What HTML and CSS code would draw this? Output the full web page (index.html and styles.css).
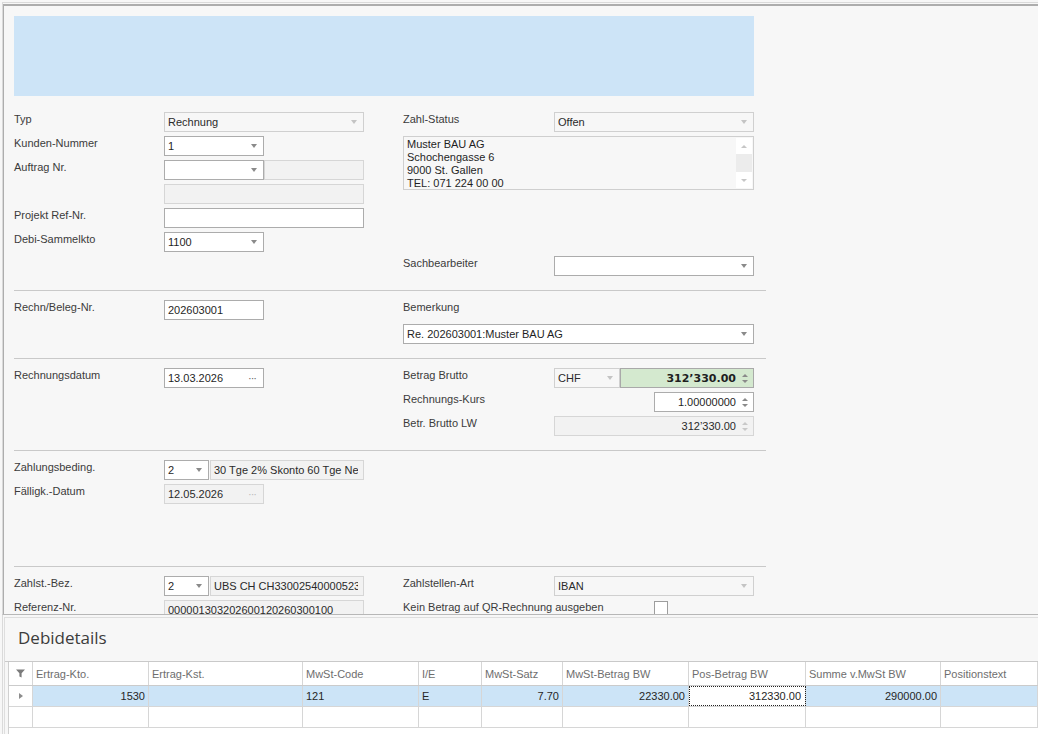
FILE: index.html
```html
<!DOCTYPE html>
<html lang="de">
<head>
  <meta charset="UTF-8" />
  <title>Debitor Rechnung</title>
  <link rel="stylesheet" href="styles.css">
</head>
<body>

  <div class="app">
    <div class="scroller">
      <div class="scroll-inner">
        <div class="banner"></div>

        <div class="form">
          <!-- Kopf -->
          <section class="sec sec-top">
            <div class="col">
              <div class="row"><span class="lbl">Typ</span><div class="fld dis w200"><span class="val">Rechnung</span><i class="arrow light"></i></div></div>
              <div class="row"><span class="lbl">Kunden-Nummer</span><div class="fld w100"><span class="val">1</span><i class="arrow"></i></div></div>
              <div class="row"><span class="lbl">Auftrag Nr.</span><div class="fld w100"><span class="val"></span><i class="arrow"></i></div><div class="fld ro w100"></div></div>
              <div class="row"><span class="lbl"></span><div class="fld ro w200"></div></div>
              <div class="row"><span class="lbl">Projekt Ref-Nr.</span><div class="fld w200"></div></div>
              <div class="row"><span class="lbl">Debi-Sammelkto</span><div class="fld w100"><span class="val">1100</span><i class="arrow"></i></div></div>
            </div>
            <div class="col">
              <div class="row"><span class="lbl">Zahl-Status</span><div class="fld dis w200"><span class="val">Offen</span><i class="arrow light"></i></div></div>
              <div class="memo">
                <div class="memo-text">
                  Muster BAU AG<br>
                  Schochengasse 6<br>
                  9000 St. Gallen<br>
                  TEL: 071 224 00 00
                </div>
                <div class="vscroll">
                  <span class="sb-btn"><i class="tri-up"></i></span>
                  <span class="sb-track"></span>
                  <span class="sb-btn"><i class="tri-down"></i></span>
                </div>
              </div>
              <div class="row sach"><span class="lbl">Sachbearbeiter</span><div class="fld w200"><span class="val"></span><i class="arrow"></i></div></div>
            </div>
          </section>

          <!-- Beleg -->
          <section class="sec">
            <div class="col">
              <div class="row"><span class="lbl">Rechn/Beleg-Nr.</span><div class="fld w100"><span class="val">202603001</span></div></div>
            </div>
            <div class="col">
              <div class="row"><span class="lbl">Bemerkung</span></div>
              <div class="row"><div class="fld wfull"><span class="val">Re. 202603001:Muster BAU AG</span><i class="arrow"></i></div></div>
            </div>
          </section>

          <!-- Betrag -->
          <section class="sec">
            <div class="col">
              <div class="row"><span class="lbl">Rechnungsdatum</span><div class="fld w100"><span class="val">13.03.2026</span><i class="dots">···</i></div></div>
            </div>
            <div class="col">
              <div class="row">
                <span class="lbl">Betrag Brutto</span>
                <div class="fld dis w66"><span class="val">CHF</span><i class="arrow light"></i></div>
                <div class="fld num green w134"><span class="val">312’330.00</span><i class="spin"><i class="tri-up"></i><i class="tri-down"></i></i></div>
              </div>
              <div class="row">
                <span class="lbl">Rechnungs-Kurs</span>
                <div class="fld num w100 push"><span class="val">1.00000000</span><i class="spin"><i class="tri-up"></i><i class="tri-down"></i></i></div>
              </div>
              <div class="row">
                <span class="lbl">Betr. Brutto LW</span>
                <div class="fld num ro w200"><span class="val">312’330.00</span><i class="spin pale"><i class="tri-up"></i><i class="tri-down"></i></i></div>
              </div>
            </div>
          </section>

          <!-- Zahlungsbedingungen -->
          <section class="sec sec-terms">
            <div class="col">
              <div class="row"><span class="lbl">Zahlungsbeding.</span><div class="fld w45"><span class="val">2</span><i class="arrow"></i></div><div class="fld ro w155"><span class="val">30 Tge 2% Skonto 60 Tge Nett</span></div></div>
              <div class="row"><span class="lbl">Fälligk.-Datum</span><div class="fld ro w100"><span class="val">12.05.2026</span><i class="dots pale">···</i></div></div>
            </div>
            <div class="col"></div>
          </section>

          <!-- Zahlstelle -->
          <section class="sec sec-last">
            <div class="col">
              <div class="row"><span class="lbl">Zahlst.-Bez.</span><div class="fld w45"><span class="val">2</span><i class="arrow"></i></div><div class="fld ro w155"><span class="val">UBS CH CH3300254000052321</span></div></div>
              <div class="row"><span class="lbl">Referenz-Nr.</span><div class="fld ro w200"><span class="val">000001303202600120260300100</span></div></div>
            </div>
            <div class="col">
              <div class="row"><span class="lbl">Zahlstellen-Art</span><div class="fld dis w200"><span class="val">IBAN</span><i class="arrow light"></i></div></div>
              <div class="row"><span class="lbl wide">Kein Betrag auf QR-Rechnung ausgeben</span><span class="check"></span></div>
            </div>
          </section>
        </div>
      </div>
    </div>

    <div class="details">
      <div class="panel">
        <h3 class="panel-title">Debidetails</h3>
        <div class="grid-wrap">
          <div class="grid">
            <div class="g-row g-head">
              <span class="g-cell ind">
                <svg width="9" height="9" viewBox="0 0 9 9"><path d="M0 0.5H9L5.6 4.3V8.6L3.4 7.4V4.3Z" fill="#7b7b7b"/></svg>
              </span>
              <span class="g-cell">Ertrag-Kto.</span>
              <span class="g-cell">Ertrag-Kst.</span>
              <span class="g-cell">MwSt-Code</span>
              <span class="g-cell">I/E</span>
              <span class="g-cell">MwSt-Satz</span>
              <span class="g-cell">MwSt-Betrag BW</span>
              <span class="g-cell">Pos-Betrag BW</span>
              <span class="g-cell">Summe v.MwSt BW</span>
              <span class="g-cell">Positionstext</span>
            </div>
            <div class="g-row sel">
              <span class="g-cell ind"><i class="tri-right"></i></span>
              <span class="g-cell r">1530</span>
              <span class="g-cell"></span>
              <span class="g-cell">121</span>
              <span class="g-cell">E</span>
              <span class="g-cell r">7.70</span>
              <span class="g-cell r">22330.00</span>
              <span class="g-cell r focus">312330.00</span>
              <span class="g-cell r">290000.00</span>
              <span class="g-cell"></span>
            </div>
            <div class="g-row">
              <span class="g-cell ind"></span>
              <span class="g-cell"></span>
              <span class="g-cell"></span>
              <span class="g-cell"></span>
              <span class="g-cell"></span>
              <span class="g-cell"></span>
              <span class="g-cell"></span>
              <span class="g-cell"></span>
              <span class="g-cell"></span>
              <span class="g-cell"></span>
            </div>
          </div>
        </div>
      </div>
    </div>
  </div>

</body>
</html>
```

FILE: styles.css
```css
* { box-sizing: border-box; }
body {
  margin: 0;
  font-family: "Liberation Sans", Arial, sans-serif;
  font-size: 11px;
  color: #3b3b3b;
  background: #f7f7f7;
}
.app {
  height: 734px;
  overflow: hidden;
  background: #f7f7f7;
}

/* ===== Formularbereich ===== */
.scroller {
  height: 612px;
  margin: 2px 0 0 2px;
  border-top: 1px solid #dadada;
  border-left: 1px solid #dadada;
  overflow: hidden;
}
.scroll-inner {
  height: 100%;
  margin-top: 1px;
  border-top: 2px solid #adadad;
  border-left: 1px solid #adadad;
}
.banner {
  width: 740px;
  height: 80px;
  margin: 10px 0 0 10px;
  background: #cde4f7;
}
.form {
  width: 762px;
  margin-top: 16px;
  padding-left: 10px;
}
.sec {
  display: flex;
  gap: 39px;
  padding: 9px 0 14px;
  border-bottom: 1px solid #c9c9c9;
}
.sec-top { padding-top: 0; }
.sec-terms { height: 116px; }
.sec-last { border-bottom: none; }
.col {
  display: flex;
  flex-direction: column;
  gap: 4px;
  width: 350px;
}
.col + .col { width: 351px; }
.row {
  display: flex;
  height: 20px;
}
.lbl {
  flex: none;
  width: 150px;
  line-height: 14px;
  white-space: nowrap;
}
.col + .col .lbl { width: 151px; }
.col + .col .lbl.wide { width: 251px; }

.fld {
  flex: none;
  display: flex;
  align-items: center;
  height: 20px;
  padding: 0 5px 0 3px;
  border: 1px solid #acacac;
  background: #fff;
  color: #1f1f1f;
}
.fld .val {
  flex: 1;
  overflow: hidden;
  white-space: nowrap;
}
.fld.dis { background: #f7f7f7; border-color: #d0d0d0; color: #2a2a2a; }
.fld.ro { background: #f2f2f2; border-color: #d6d6d6; color: #2a2a2a; }
.fld.num .val { text-align: right; padding-right: 6px; }
.fld.green { background: #d4e9cf; border-color: #a9a9a9; font-family: "DejaVu Sans", sans-serif; font-weight: bold; font-size: 11px; }
.w45 { width: 45px; }
.w66 { width: 66px; }
.w100 { width: 100px; }
.w134 { width: 134px; }
.w155 { width: 154px; margin-left: 1px; }
.w200 { width: 200px; }
.wfull { width: 351px; }
.push { margin-left: 100px; }

.arrow {
  flex: none;
  width: 0;
  height: 0;
  margin-right: 1px;
  border-left: 3.5px solid transparent;
  border-right: 3.5px solid transparent;
  border-top: 4px solid #8a8a8a;
}
.arrow.light { border-top-color: #c4c4c4; }
.dots {
  flex: none;
  font-style: normal;
  font-size: 11px;
  letter-spacing: -1px;
  color: #666;
  margin-right: 2px;
}
.dots.pale { color: #bbb; }
.spin {
  flex: none;
  display: flex;
  flex-direction: column;
  gap: 3px;
}
.tri-up {
  display: block;
  width: 0;
  height: 0;
  border-left: 3px solid transparent;
  border-right: 3px solid transparent;
  border-bottom: 3px solid #8a8a8a;
}
.tri-down {
  display: block;
  width: 0;
  height: 0;
  border-left: 3px solid transparent;
  border-right: 3px solid transparent;
  border-top: 3px solid #8a8a8a;
}
.spin.pale .tri-up { border-bottom-color: #c8c8c8; }
.spin.pale .tri-down { border-top-color: #c8c8c8; }

.memo {
  display: flex;
  width: 351px;
  height: 54px;
  border: 1px solid #cfcfcf;
  background: #f7f7f7;
  color: #1f1f1f;
}
.memo-text {
  flex: 1;
  padding: 1px 0 0 3px;
  line-height: 13px;
}
.vscroll {
  display: flex;
  flex-direction: column;
  width: 16px;
  margin: 1px 1px 1px 0;
  background: #ececec;
}
.sb-btn {
  display: flex;
  align-items: center;
  justify-content: center;
  height: 16px;
  background: #fff;
}
.sb-btn .tri-up { border-bottom-color: #c6c6c6; }
.sb-btn .tri-down { border-top-color: #c6c6c6; }
.sb-track { flex: 1; }
.sach { margin-top: 62px; }

.check {
  width: 14px;
  height: 14px;
  margin-top: 1px;
  border: 1px solid #9d9d9d;
  background: #fff;
}

/* ===== Debidetails ===== */
.details {
  margin-left: 2px;
  padding-top: 2px;
  border-top: 1px solid #b7b7b7;
  border-left: 1px solid #dadada;
  height: 120px;
}
.panel {
  height: 100%;
  margin-left: 1px;
  border-top: 1px solid #dedede;
  border-left: 1px solid #dedede;
}
.panel-title {
  margin: 0;
  height: 43px;
  padding: 7px 0 0 13px;
  font-family: "Open Sans", sans-serif;
  font-size: 17px;
  font-weight: normal;
  line-height: 26px;
  color: #3c3c3c;
}
.grid-wrap {
  height: 100%;
  padding-left: 3px;
  border-top: 1px solid #c9c9c9;
}
.grid {
  height: 100%;
  border-left: 1px solid #d0d0d0;
  background: #fff;
}
.g-row {
  display: grid;
  grid-template-columns: 24px 116px 154px 116px 63px 81px 126px 117px 135px 1fr;
  height: 21px;
  border-bottom: 1px solid #d6d6d6;
  color: #262626;
}
.g-head {
  height: 24px;
  border-bottom-color: #cbcbcb;
  color: #6e6e6e;
}
.g-cell {
  display: flex;
  align-items: center;
  padding: 0 3px 0 3px;
  border-right: 1px solid #d6d6d6;
  white-space: nowrap;
  overflow: hidden;
}
.g-cell.r { justify-content: flex-end; }
.g-cell.ind { justify-content: center; background: #fff; }
.sel { background: #cce4f7; }
.sel .focus {
  background: #fff;
  outline: 1px dotted #222;
  outline-offset: -1px;
  padding-right: 4px;
}
.tri-right {
  display: block;
  width: 0;
  height: 0;
  border-top: 3px solid transparent;
  border-bottom: 3px solid transparent;
  border-left: 4px solid #8c8c8c;
}
```
